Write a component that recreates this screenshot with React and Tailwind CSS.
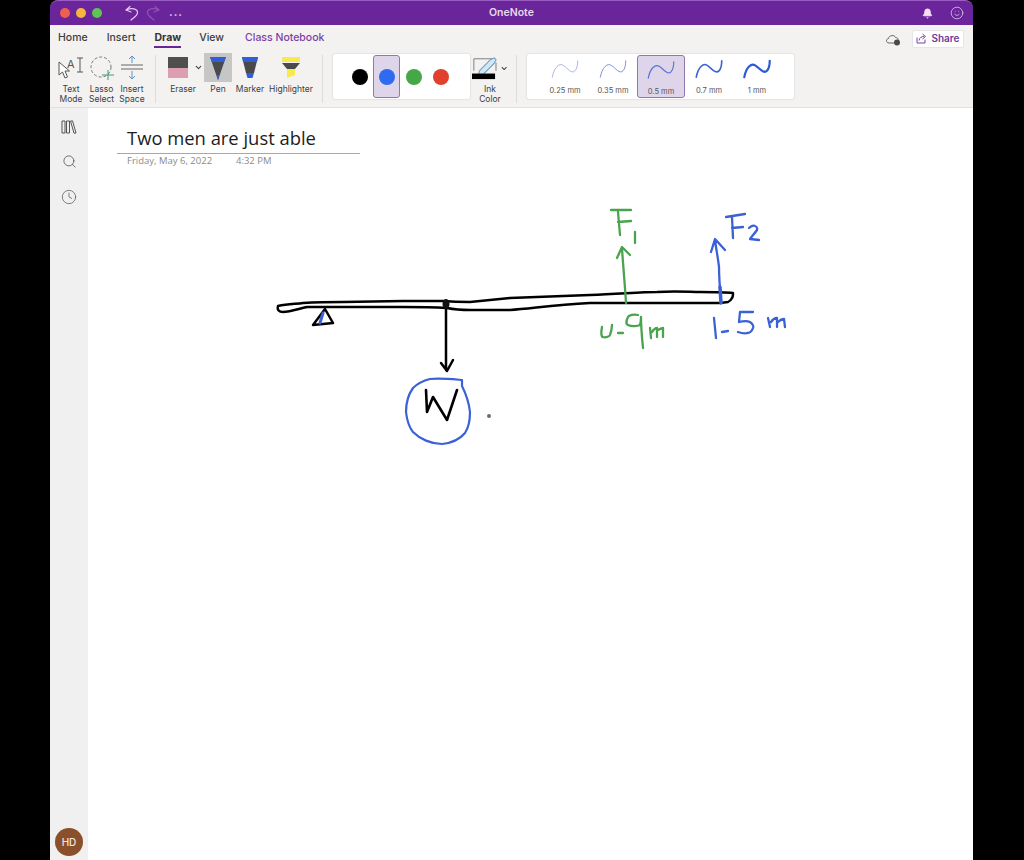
import React from 'react';
import { Bell, ChevronDown, Clock, Search, Smile } from 'lucide-react';

const font = { fontFamily: 'Inter, "Liberation Sans", sans-serif' };

const TrafficLights = () => (
  <div className="flex gap-[6px] pl-[10px]">
    <span className="w-[10px] h-[10px] rounded-full bg-[#ee5f50]" />
    <span className="w-[10px] h-[10px] rounded-full bg-[#f5b53f]" />
    <span className="w-[10px] h-[10px] rounded-full bg-[#5ec454]" />
  </div>
);

const UndoIcon = ({ color }) => (
  <svg width="16" height="16" viewBox="0 0 16 16" fill="none" stroke={color} strokeWidth="1.2" strokeLinecap="round" strokeLinejoin="round">
    <path d="M2 5 L6 1.5 M2 5 L7 7" />
    <path d="M2.5 5 C7 2.5 14 3.5 13.5 8 C13 11.5 9 13 7 15" />
  </svg>
);

const TitleBar = () => (
  <div className="relative flex items-center h-[25px] rounded-t-[8px] bg-[#6b259b] border-t border-[#9a5dc4]">
    <TrafficLights />
    <div className="ml-[22px]"><UndoIcon color="#e3c9f2" /></div>
    <div className="ml-[5px] -scale-x-100"><UndoIcon color="#8d55b5" /></div>
    <span className="ml-[8px] mb-[2px] text-[11px] font-bold leading-none tracking-[1px] text-[#e3c9f2]">...</span>
    <span className="absolute left-[439px] text-[10.5px] font-semibold text-[#e6d8ee]">OneNote</span>
    <div className="ml-auto flex items-center gap-[17px] pr-[9px]">
      <Bell size={11} className="text-[#f6dff8] fill-[#f6dff8]" />
      <Smile size={14} strokeWidth={1.3} className="text-[#e6cdf0]" />
    </div>
  </div>
);

const TabsRow = () => (
  <div className="flex items-center h-[25px] bg-[#f3f2f1] pl-[8px] pr-[9px] text-[10.5px] font-medium text-[#3d3d3d]">
    <span>Home</span>
    <span className="ml-[19px]">Insert</span>
    <span className="relative ml-[19px] font-bold text-[#333]">
      Draw
      <span className="absolute left-0 right-0 top-[16px] h-[2px] bg-[#6b259b]" />
    </span>
    <span className="ml-[18px]">View</span>
    <span className="ml-[21px] font-medium text-[#7b3fa8]">Class Notebook</span>
    <svg className="ml-auto mt-[2px]" width="16" height="14" viewBox="0 0 16 14" fill="none">
      <path d="M4 11 C1 11 0.5 7 3.5 6.5 C4 3 9.5 2.5 10.5 5.5 C12.5 5.5 13.5 7 13 8.5" stroke="#666" strokeWidth="1" />
      <path d="M4 11 H9" stroke="#666" strokeWidth="1" />
      <circle cx="12" cy="10.5" r="3" fill="#4a4a4a" />
    </svg>
    <div className="flex items-center justify-center gap-[4px] ml-[11px] mt-[2px] w-[52px] h-[18px] bg-white border border-[#e6e6e6] rounded-[2px]">
      <svg width="11" height="11" viewBox="0 0 11 11" fill="none" stroke="#7b3fa8" strokeWidth="1">
        <path d="M1 4.5 V10 H9 V6.5" />
        <path d="M3 7.5 C3.5 4.5 5.5 3.5 8 3.5 M6.5 1 L9.5 3.5 L6.5 6" />
      </svg>
      <span className="text-[10px] font-semibold text-[#6f3a9e]">Share</span>
    </div>
  </div>
);

const TextModeIcon = () => (
  <svg width="26" height="26" viewBox="0 0 26 26" fill="none">
    <path d="M1 7 L1 20 L4.5 17 L7 23 L9.5 22 L7 16 L11.5 16 Z" fill="#fff" stroke="#555" strokeWidth="1" strokeLinejoin="round" />
    <text x="9" y="13" fontSize="11" fill="#555" fontFamily="Inter, sans-serif">A</text>
    <path d="M19 3 H25 M22 3 V17 M19 17 H25" stroke="#555" strokeWidth="1" />
  </svg>
);

const LassoIcon = () => (
  <svg width="26" height="26" viewBox="0 0 26 26" fill="none">
    <circle cx="12" cy="12" r="10" stroke="#777" strokeWidth="1" strokeDasharray="3 2" />
    <path d="M19 15 V25 M13 20 H25" stroke="#3f9a78" strokeWidth="1" />
  </svg>
);

const InsertSpaceIcon = () => (
  <svg width="24" height="26" viewBox="0 0 24 26" fill="none">
    <path d="M1 10 H23 M1 14 H23" stroke="#666" strokeWidth="1" />
    <path d="M12 8 V1 M9 4 L12 1 L15 4 M12 16 V24 M9 21 L12 24 L15 21" stroke="#5b93c9" strokeWidth="1" />
  </svg>
);

const EraserIcon = () => (
  <div className="flex flex-col w-[20px] h-[21px]">
    <span className="h-[11px] bg-[#4f4f50]" />
    <span className="h-[10px] bg-[#dd9fb0]" />
  </div>
);

const PenIcon = () => (
  <svg width="16" height="24" viewBox="0 0 16 24">
    <path d="M0 1 H16 L8 24 Z" fill="#4a4a4c" />
    <path d="M0 1 H16 L14 6 H2 Z" fill="#2f5fd8" />
    <path d="M6.5 19 H9.5 L8 24 Z" fill="#2f5fd8" />
  </svg>
);

const MarkerIcon = () => (
  <svg width="16" height="23" viewBox="0 0 16 23">
    <path d="M0 1 H16 L12 17 H4 Z" fill="#4a4a4c" />
    <path d="M0 1 H16 L15 6 H1 Z" fill="#2f5fd8" />
    <path d="M4 17 H12 L10.5 22 H5.5 Z" fill="#2f5fd8" />
  </svg>
);

const HighlighterIcon = () => (
  <svg width="20" height="23" viewBox="0 0 20 23">
    <path d="M1 1 H19 V6 H1 Z" fill="#f6ea4e" />
    <path d="M1 7 H19 L14 13 H6 Z" fill="#4a4a4c" />
    <path d="M6 13 H14 V19 L6 22 Z" fill="#f6ea4e" />
  </svg>
);

const InkColorIcon = () => (
  <svg width="30" height="24" viewBox="0 0 30 24" fill="none">
    <path d="M2 15 V2 H24 M26 6 V15" stroke="#777" strokeWidth="1" />
    <path d="M8 15 L20 3 L24 1 L26 3 L24 7 L12 19 L7 20 Z" fill="#d5e7f3" stroke="#6aa2c9" strokeWidth="1.2" />
    <rect x="0" y="18" width="25" height="6" fill="#000" />
  </svg>
);

const Tool = ({ width, label, children, active }) => (
  <div className="flex flex-col items-center" style={{ width }}>
    <div className={`flex items-center justify-center w-full h-[29px] ${active ? 'bg-[#c6c6c6]' : ''}`}>
      {children}
    </div>
    <span className="mt-[2px] text-[8.5px] leading-[10px] text-center text-[#3d3d3d]">{label}</span>
  </div>
);

const Separator = ({ className }) => <div className={`w-px h-[48px] mt-[2px] bg-[#dcdcdc] ${className}`} />;

const colors = [
  { hex: '#000000' },
  { hex: '#2f6bf0', selected: true },
  { hex: '#45a748' },
  { hex: '#e0402d' },
];

const ColorCard = () => (
  <div className="flex items-center w-[137px] h-[45px] mt-[1px] ml-[10px] pl-[13px] bg-white rounded-[2px] shadow-[0_0_2px_rgba(0,0,0,0.2)]">
    {colors.map((c) => (
      <div
        key={c.hex}
        className={`flex items-center justify-center w-[27px] h-[43px] rounded-[3px] ${c.selected ? 'bg-[#dfd5ea] border border-[#8f78ad]' : ''}`}
      >
        <span className="w-[16px] h-[16px] rounded-full" style={{ backgroundColor: c.hex }} />
      </div>
    ))}
  </div>
);

const thicknesses = [
  { label: '0.25 mm', stroke: 0.8, color: '#8e9bd8' },
  { label: '0.35 mm', stroke: 1, color: '#7288d8' },
  { label: '0.5 mm', stroke: 1.3, color: '#5574d4', selected: true },
  { label: '0.7 mm', stroke: 1.8, color: '#3b63d4' },
  { label: '1 mm', stroke: 2.4, color: '#2c59d6' },
];

const ThicknessCard = () => (
  <div className="flex items-center w-[267px] h-[45px] mt-[1px] ml-[10px] pl-[14px] bg-white rounded-[2px] shadow-[0_0_2px_rgba(0,0,0,0.2)]">
    {thicknesses.map((t) => (
      <div
        key={t.label}
        className={`flex flex-col items-center w-[48px] h-[43px] pt-[4px] rounded-[3px] ${t.selected ? 'bg-[#dfd5ea] border border-[#8f78ad]' : ''}`}
      >
        <svg width="32" height="20" viewBox="0 0 32 22" fill="none">
          <path d="M2 20 C4 9 10 4 14 7 C19 10 23 17 27 13 C29 11 30 7 30 2" stroke={t.color} strokeWidth={t.stroke} strokeLinecap="round" />
        </svg>
        <span className="mt-[7px] text-[7.5px] leading-[9px] text-[#555]">{t.label}</span>
      </div>
    ))}
  </div>
);

const Ribbon = () => (
  <div className="flex items-start h-[58px] pt-[3px] pl-[6px] bg-[#f3f2f1] border-b border-[#e0e0e0]">
    <Tool width={30} label={<>Text<br />Mode</>}><TextModeIcon /></Tool>
    <Tool width={31} label={<>Lasso<br />Select</>}><LassoIcon /></Tool>
    <Tool width={30} label={<>Insert<br />Space</>}><InsertSpaceIcon /></Tool>
    <Separator className="ml-[8px]" />
    <div className="flex flex-col items-center w-[48px]">
      <div className="flex items-center h-[29px] pl-[12px] w-full gap-[6px]">
        <EraserIcon />
        <ChevronDown size={9} strokeWidth={3} className="text-[#444]" />
      </div>
      <span className="mt-[2px] pl-[6px] text-[8.5px] leading-[10px] text-[#3d3d3d]">Eraser</span>
    </div>
    <Tool width={28} label="Pen" active><PenIcon /></Tool>
    <Tool width={36} label="Marker"><MarkerIcon /></Tool>
    <Tool width={46} label="Highlighter"><HighlighterIcon /></Tool>
    <Separator className="ml-[8px]" />
    <ColorCard />
    <div className="flex flex-col items-center w-[36px] ml-[2px]">
      <div className="flex items-start w-full h-[29px] pt-[3px]">
        <InkColorIcon />
        <ChevronDown size={9} strokeWidth={3} className="mt-[8px] text-[#444]" />
      </div>
      <span className="mt-[2px] text-[8.5px] leading-[10px] text-center text-[#3d3d3d]">Ink<br />Color</span>
    </div>
    <Separator className="ml-[8px]" />
    <ThicknessCard />
  </div>
);

const LibraryIcon = () => (
  <svg width="16" height="14" viewBox="0 0 16 14" fill="none" stroke="#555" strokeWidth="1">
    <path d="M1 1 H4 V13 H1 Z M5.5 1 H8.5 V13 H5.5 Z" />
    <path d="M9.5 1 L11.5 0.8 L15 13 L13 13.2 Z" />
  </svg>
);

const Sidebar = () => (
  <div className="flex flex-col items-center w-[38px] pt-[12px] bg-[#f0f0f0]">
    <LibraryIcon />
    <Search size={15} strokeWidth={1.3} className="mt-[20px] text-[#555]" />
    <Clock size={16} strokeWidth={1.1} className="mt-[20px] text-[#555]" />
    <div className="flex items-center justify-center mt-auto mb-[4px] w-[28px] h-[28px] rounded-full bg-[#8a4f2b] text-[10px] font-medium text-[#f3e6da]">
      HD
    </div>
  </div>
);

// Encre manuscrite, en coordonnées de l'écran
const Ink = () => (
  <svg className="absolute left-0 top-0" width="885" height="752" viewBox="88 108 885 752" fill="none" strokeLinecap="round" strokeLinejoin="round">
    <g stroke="#000" strokeWidth="2.5">
      <path d="M278 306 C288 304 296 304 303 303 C320 302 330 302 343 302 L403 301 L443 301 C455 302 462 302 470 302 C490 300 500 299 510 298 C540 297 565 296 590 295 C620 294 640 292 657 292 C675 291 690 292 700 292 C715 292 725 292 733 293 C733 295 733 297 732 298 C731 300 730 301 728 302 L720 303 C700 303 680 303 657 303 C630 303 610 303 590 303 C550 305 530 309 510 310 C495 310 480 310 470 310 C460 310 452 309 447 308 C430 307 415 307 403 307 C390 307 375 307 360 307 C340 307 325 307 307 307 C298 309 290 312 283 312 C279 312 277 310 278 306 Z" />
      <path d="M325 309 L313 325 L333 323 Z" />
      <path d="M446 305 L446 370 M441 363 L447 371 L453 360" />
      <path d="M426 390 L427 412 L433 397 L447 420 L457 390" strokeWidth="2.6" />
    </g>
    <ellipse cx="446" cy="304" rx="3.5" ry="5" fill="#111" />
    <path d="M323 313 L320 323" stroke="#3a62d6" strokeWidth="3" />
    <path d="M462 380 C450 379 440 378 430 379 C422 381 417 384 413 388 C408 395 406 403 406 412 C407 421 409 427 413 432 C420 439 431 444 442 444 C452 443 460 439 465 433 C469 427 470 420 470 412 C469 403 466 394 462 386 L462 380" stroke="#3a62d6" strokeWidth="2.2" />
    <circle cx="489" cy="416" r="2" fill="#6b6b78" />
    <g stroke="#4aa34f" strokeWidth="2.3">
      <path d="M618 212 L620 235 M611 210 L631 210 M618 222 L631 221 M635 232 L635 243" />
      <path d="M626 303 C625 285 623 265 622 248 M617 258 L622 247 L630 255" />
      <path d="M602 327 C601 332 601 337 603 337 C606 338 610 336 610 335 C611 332 612 328 612 325 M618 333 L623 333" />
      <path d="M638 315 C634 314 629 315 628 317 C626 321 626 324 628 325 C632 327 638 326 640 325 C641 322 641 319 641 317 C641 328 642 338 643 348" />
      <path d="M650 328 L651 338 M652 332 C654 329 656 328 657 328 L657 337 M658 330 C660 329 662 328 663 328 L663 337" />
    </g>
    <g stroke="#3a62d6" strokeWidth="2.3">
      <path d="M732 217 L733 238 M726 217 L745 214 M732 228 L743 227" />
      <path d="M749 228 C751 226 754 225 755 226 C758 227 757 230 757 230 C755 233 752 236 750 239 L759 240" />
      <path d="M721 302 C720 290 719 278 719 267 C718 258 716 248 715 240 M711 252 L715 239 L725 250" />
      <path d="M720 287 L721 303" strokeWidth="3.5" />
      <path d="M714 318 L716 338 M722 332 L728 331" />
      <path d="M753 312 L740 312 L739 322 C743 321 748 321 750 322 C753 324 754 327 753 328 C752 331 750 333 747 333 C744 334 741 333 738 332" />
      <path d="M768 318 L770 327 M771 322 C773 319 775 318 777 318 L777 327 M778 322 C780 320 782 319 784 319 L785 327" />
    </g>
  </svg>
);

const Page = () => (
  <div className="relative flex-1 bg-white">
    <div className="pt-[18px] pl-[29px]">
      <div className="w-[243px] pl-[10px] pb-[3px] border-b border-[#a8a8a8]">
        <h1 className="text-[18.4px] leading-[24px] text-[#1c1c1c]" style={{ fontFamily: '"Open Sans", sans-serif' }}>
          Two men are just able
        </h1>
      </div>
      <div className="flex pl-[10px] pt-[1px] text-[9.5px] leading-[11px] text-[#8a8a8a]" style={{ fontFamily: '"Open Sans", sans-serif' }}>
        <span className="w-[109px]">Friday, May 6, 2022</span>
        <span>4:32 PM</span>
      </div>
    </div>
    <Ink />
  </div>
);

export default function App() {
  return (
    <div className="w-[1024px] h-[860px] pl-[50px] bg-black overflow-hidden" style={font}>
      <div className="flex flex-col w-[923px] h-full">
        <TitleBar />
        <TabsRow />
        <Ribbon />
        <div className="flex flex-1">
          <Sidebar />
          <Page />
        </div>
      </div>
    </div>
  );
}
